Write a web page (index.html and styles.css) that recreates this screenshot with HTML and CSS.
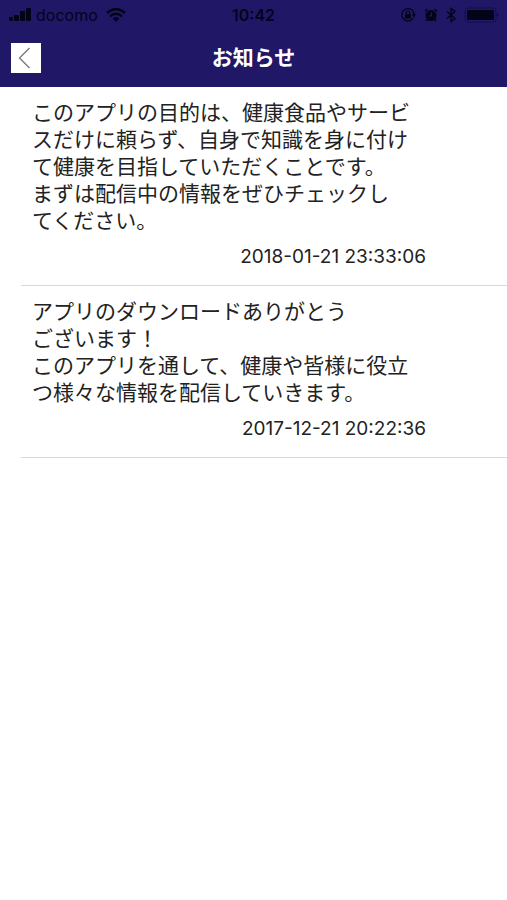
FILE: index.html
```html
<!DOCTYPE html>
<html lang="ja">
<head>
<meta charset="utf-8">
<meta name="viewport" content="width=device-width, initial-scale=1">
<title>お知らせ</title>
<link rel="stylesheet" href="styles.css">
</head>
<body>
<header class="header">
  <div class="status">
    <div class="status-side">
      <svg width="24" height="14" viewBox="0 0 24 14" aria-hidden="true"><rect x="1" y="9" width="4" height="4" rx="1"/><rect x="6" y="7" width="5" height="6" rx="1"/><rect x="12" y="3" width="5" height="10" rx="1"/><rect x="18" y="0" width="5" height="13" rx="1"/></svg>
      <span class="carrier">docomo</span>
      <svg class="wifi" width="20" height="14" viewBox="0 0 20 14" aria-hidden="true"><path d="M1 5Q10-3 19 5M4 8.300Q10 3 16 8.300" fill="none" stroke="#050318" stroke-width="2.400"/><path d="M6.500 10.500Q10 7.500 13.500 10.500L10 14Z"/></svg>
    </div>
    <span class="clock">10:42</span>
    <div class="status-side status-right">
      <svg width="16" height="16" viewBox="0 0 16 16" aria-hidden="true"><path d="M13.300 11A6.200 6.200 0 1 1 14.200 8" fill="none" stroke="#050318" stroke-width="1.300"/><path d="M11.800 7.500h4.200L14 10.500z"/><rect x="5" y="7" width="6" height="4.500" rx=".5"/><path d="M6.300 7V5.700a1.700 1.700 0 0 1 3.400 0V7" fill="none" stroke="#050318" stroke-width="1.100"/></svg>
      <svg class="alarm" width="14" height="16" viewBox="0 0 14 16" aria-hidden="true"><circle cx="7" cy="8.500" r="5.500"/><path d="M1 4.500 3.500 2M10.500 2 13 4.500M3 12.500 2 14M11 12.500l1 1.500" stroke="#050318" stroke-width="1.500"/><path d="M7.500 5.500V9H5" fill="none" stroke="#211767" stroke-width="1"/></svg>
      <svg class="bluetooth" width="10" height="16" viewBox="0 0 10 16" aria-hidden="true"><path d="M1 4.500 9 11.500 5 14.500V1.500L9 4.500 1 11.500" fill="none" stroke="#050318" stroke-width="1.400"/></svg>
      <svg class="battery" width="35" height="16" viewBox="0 0 35 16" aria-hidden="true"><rect x="1" y="1" width="31" height="14" rx="3" fill="none" stroke="#140d49"/><rect x="3" y="3" width="27" height="10" rx="1"/><path d="M33 6q2 2 0 4z"/></svg>
    </div>
  </div>
  <nav class="navbar">
    <button class="back" type="button" aria-label="戻る"><svg width="30" height="30" viewBox="0 0 30 30" aria-hidden="true"><path d="M18.500 5 8.500 15 18.500 25" fill="none" stroke="#777" stroke-width="1.300"/></svg></button>
    <h1 class="title">お知らせ</h1>
  </nav>
</header>
<main>
  <ul class="news">
    <li class="item">
      <p class="message">このアプリの目的は、健康食品やサービ<br>スだけに頼らず、自身で知識を身に付け<br>て健康を目指していただくことです。<br>まずは配信中の情報をぜひチェックし<br>てください。</p>
      <time class="date" datetime="2018-01-21T23:33:06">2018-01-21 23:33:06</time>
    </li>
    <li class="item">
      <p class="message">アプリのダウンロードありがとう<br>ございます！<br>このアプリを通して、健康や皆様に役立<br>つ様々な情報を配信していきます。</p>
      <time class="date" datetime="2017-12-21T20:22:36">2017-12-21 20:22:36</time>
    </li>
  </ul>
</main>
</body>
</html>
```
FILE: styles.css
```css
* {
  box-sizing: border-box;
}

body {
  margin: 0;
  background: #fff;
  color: #222;
  font-family: Inter, "Noto Sans CJK JP", sans-serif;
}

.header {
  background: #211767;
}

.status {
  display: grid;
  grid-template-columns: 1fr auto 1fr;
  align-items: center;
  height: 28px;
  padding: 2px 8px 0;
  color: #050318;
  fill: #050318;
  font-size: 16px;
}

.status-side {
  display: flex;
  align-items: center;
}

.status-right {
  justify-content: flex-end;
}

.carrier {
  margin-left: 4px;
}

.wifi {
  margin-left: 8px;
}

.clock {
  font-weight: 600;
}

.alarm {
  margin-left: 8px;
}

.bluetooth {
  margin-left: 8px;
}

.battery {
  margin-left: 8px;
}

.navbar {
  display: grid;
  grid-template-columns: 30px 1fr 30px;
  align-items: center;
  height: 59px;
  padding: 0 11px;
}

.back {
  display: flex;
  width: 30px;
  height: 30px;
  padding: 0;
  border: 0;
  background: #fff;
}

.title {
  margin: 0;
  color: #fff;
  font-size: 21px;
  font-weight: 700;
  line-height: 30px;
  text-align: center;
}

.news {
  margin: 0;
  padding: 0 0 0 21px;
  list-style: none;
}

.item {
  padding: 12px 81px 15px 11px;
  border-bottom: 1px solid #d8d8d8;
}

.message {
  margin: 0;
  font-size: 21px;
  line-height: 27px;
  white-space: nowrap;
}

.date {
  display: block;
  margin-top: 9px;
  font-size: 19px;
  line-height: 27px;
  text-align: right;
}
```
